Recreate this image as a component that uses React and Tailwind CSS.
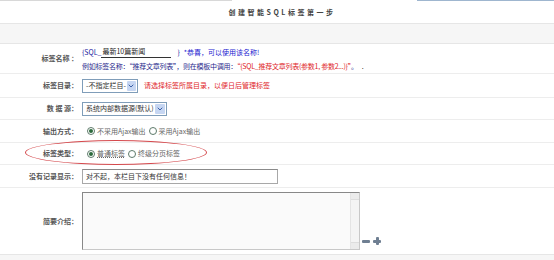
import { ChevronDown } from "lucide-react";

const font = {
  fontFamily: '"Noto Sans CJK SC", "Noto Sans", sans-serif',
};

function Row({ label, height, children, last }) {
  return (
    <div
      className={`flex items-center ${last ? "" : "border-b border-[#ededed]"}`}
      style={{ height }}
    >
      <div className="w-[82px] shrink-0 pr-[4px] text-right text-[7px] font-bold text-[#555] whitespace-pre">
        {label}
      </div>
      <div className="flex-1 min-w-0">{children}</div>
    </div>
  );
}

function FakeSelect({ width, text }) {
  return (
    <div
      className="flex h-[14px] items-center border border-[#7f9db9] bg-white pl-[3px] text-[7px] text-[#333]"
      style={{ width }}
    >
      <span className="flex-1 whitespace-nowrap">{text}</span>
      <span className="m-[1px] flex h-[10px] w-[10px] items-center justify-center rounded-[1px] bg-[#c6d6f2] text-[#3a5fa8]">
        <ChevronDown size={8} strokeWidth={3} />
      </span>
    </div>
  );
}

function Radio({ checked, label, underline }) {
  return (
    <label className="flex items-center gap-[2px] text-[7px] text-[#666]">
      <span className="flex h-[8px] w-[8px] items-center justify-center rounded-full border border-[#5d7a6a] bg-white">
        {checked && <span className="h-[4px] w-[4px] rounded-full bg-[#2c6a3c]" />}
      </span>
      <span className={underline ? "underline decoration-dotted" : ""}>{label}</span>
    </label>
  );
}

export default function App() {
  return (
    <div className="relative h-[260px] w-[554px] overflow-hidden bg-white" style={font}>
      {/* top edge */}
      <div className="flex h-[1px]">
        <div className="w-[232px] bg-[#d8d8d8]" />
        <div className="w-[185px]" />
        <div className="flex-1 bg-[#9fb6cf]" />
      </div>

      {/* title */}
      <div className="flex h-[22px] items-center justify-center pl-[10px] text-[7px] font-bold tracking-[2.5px] text-[#444]">
        创建智能SQL标签第一步
      </div>

      {/* gray band */}
      <div className="h-[21px] border-y border-[#e6e6e6] bg-[#f6f6f6]" />

      <Row label="标签名称 ：" height={30}>
        <div className="flex flex-col gap-[3px] text-[7px]">
          <div className="flex items-end text-[#2323a0]">
            <span>{"{SQL_"}</span>
            <span className="w-[70px] border-b border-[#333] pl-[1px] text-[#222]">最新10篇新闻</span>
            <span className="ml-[6px]">{"}"}</span>
            <span className="ml-[4px] text-[#1a1ad0]">*恭喜，可以使用该名称!</span>
          </div>
          <div className="whitespace-nowrap tracking-[-0.25px] text-[#2a2a8c]">
            例如标签名称：“推荐文章列表”，则在模板中调用：
            <span className="text-[#e0262a]">“{"{SQL_推荐文章列表(参数1, 参数2...)}"}”</span>
            。<span className="ml-[4px] text-[#222]">.</span>
          </div>
        </div>
      </Row>

      <Row label="标签目录：" height={24}>
        <div className="flex items-center gap-[6px]">
          <FakeSelect width={56} text="-不指定栏目-" />
          <span className="text-[7px] text-[#e0262a]">请选择标签所属目录，以便日后管理标签</span>
        </div>
      </Row>

      <Row label="数 据 源：" height={22}>
        <FakeSelect width={85} text="系统内部数据源(默认)" />
      </Row>

      <Row label="输出方式：" height={23}>
        <div className="flex items-center gap-[3px] pl-[5px]">
          <Radio checked label="不采用Ajax输出" />
          <Radio label="采用Ajax输出" />
        </div>
      </Row>

      <Row label="标签类型：" height={22}>
        <div className="flex items-center gap-[3px] pl-[5px]">
          <Radio checked label="普通标签" underline />
          <Radio label="终级分页标签" />
        </div>
      </Row>

      <Row label="没有记录显示：" height={23}>
        <div className="flex h-[15px] w-[196px] items-center border border-[#a8a8a8] border-t-[#8a8a8a] bg-white pl-[3px] text-[7px] text-[#333]">
          对不起，本栏目下没有任何信息！
        </div>
      </Row>

      <Row label="简要介绍：" height={66} last>
        <div className="flex items-end gap-[2px]">
          <div className="flex h-[58px] w-[278px] border border-[#c8c8c8] border-l-[#888] border-t-[#888] bg-[#fafafa]">
            <div className="flex-1" />
            <div className="flex w-[9px] flex-col justify-between border-l border-[#e4e4e4] bg-[#f4f4f4]">
              <div className="h-[7px] border-b border-[#ddd] bg-[#ebebeb]" />
              <div className="h-[7px] border-t border-[#ddd] bg-[#ebebeb]" />
            </div>
          </div>
          <div className="mb-[5px] flex items-center gap-[3px]">
            <span className="h-[3px] w-[8px] rounded-[1px] bg-[#6f7f92]" />
            <span className="relative h-[8px] w-[8px]">
              <span className="absolute left-[2.5px] top-0 h-[8px] w-[3px] rounded-[1px] bg-[#6f7f92]" />
              <span className="absolute left-0 top-[2.5px] h-[3px] w-[8px] rounded-[1px] bg-[#6f7f92]" />
            </span>
          </div>
        </div>
      </Row>

      {/* bottom band */}
      <div className="h-[10px] border-t border-[#e6e6e6] bg-[#f6f6f6]" />

      {/* red annotation ellipse */}
      <div className="pointer-events-none absolute left-[25px] top-[140px] h-[25px] w-[182px] rounded-[50%] border border-[#d4484c]" />
    </div>
  );
}
